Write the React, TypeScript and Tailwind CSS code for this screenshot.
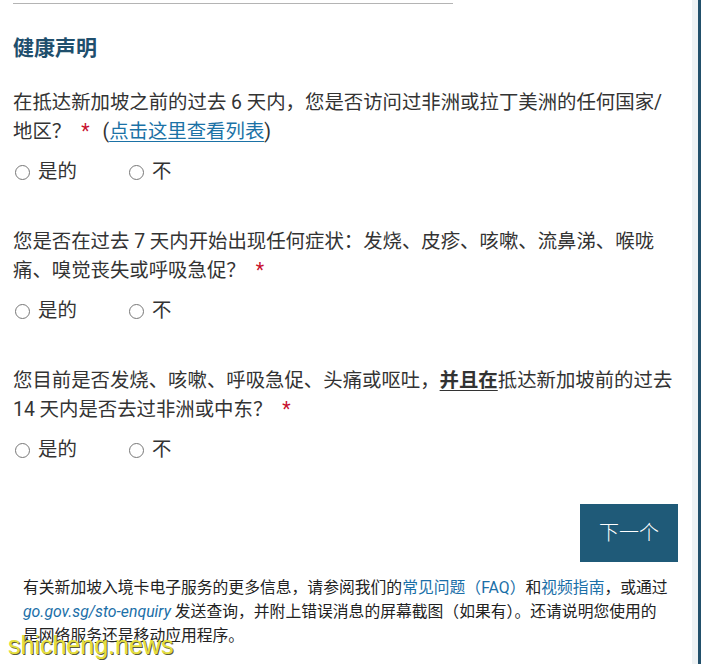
// Health declaration step of the arrival card form.
import type { ReactNode } from 'react'

const FONT = 'font-[Roboto,"Noto_Sans_CJK_SC",sans-serif]'

interface Question {
  id: string
  body: ReactNode
}

function Required() {
  return <span className="ml-[10px] text-[#c8102e]">*</span>
}

const questions: Question[] = [
  {
    id: 'q-africa-latam',
    body: (
      <>
        在抵达新加坡之前的过去 6 天内，您是否访问过非洲或拉丁美洲的任何国家/
        <br />
        地区？
        <Required />
        <span className="ml-[13px]">
          (
          <a href="#" className="text-[#1b72a6] underline underline-offset-[3px]">
            点击这里查看列表
          </a>
          )
        </span>
      </>
    ),
  },
  {
    id: 'q-symptoms',
    body: (
      <>
        您是否在过去 7 天内开始出现任何症状：发烧、皮疹、咳嗽、流鼻涕、喉咙
        <br />
        痛、嗅觉丧失或呼吸急促？
        <Required />
      </>
    ),
  },
  {
    id: 'q-mers',
    body: (
      <>
        您目前是否发烧、咳嗽、呼吸急促、头痛或呕吐，
        <b className="font-bold underline underline-offset-[3px]">并且在</b>
        抵达新加坡前的过去
        <br />
        14 天内是否去过非洲或中东？
        <Required />
      </>
    ),
  },
]

function RadioOption({ name, label, wide }: { name: string; label: string; wide?: boolean }) {
  return (
    <label className={`flex items-center ${wide ? 'w-[114px]' : ''}`}>
      <input
        type="radio"
        name={name}
        className="m-0 h-[15px] w-[15px] appearance-none rounded-full border border-[#777] bg-white"
      />
      <span className="ml-[8px]">{label}</span>
    </label>
  )
}

export default function App() {
  return (
    <div className={`relative flex h-[664px] w-[701px] overflow-hidden bg-white ${FONT}`}>
      <main className="w-[692px] pl-[13px]">
        <div className="mt-[3px] h-px w-[440px] bg-[#b4b4b4]" />

        <h2 className="mt-[30px] text-[21px] font-bold leading-[28px] text-[#1f4f6d]">健康声明</h2>

        <div className="mt-[27px] w-[667px]">
          {questions.map((q, i) => (
            <fieldset key={q.id} className={i === 0 ? '' : 'mt-[42px]'}>
              <p className="text-[19.4px] leading-[28.5px] text-[#333]">{q.body}</p>
              <div className="mt-[12px] flex h-[28px] items-center pl-[2px] text-[19.4px] text-[#333]">
                <RadioOption name={q.id} label="是的" wide />
                <RadioOption name={q.id} label="不" />
              </div>
            </fieldset>
          ))}
        </div>

        <div className="mt-[40px] flex w-[665px] justify-end">
          <button
            type="button"
            className="h-[58px] w-[98px] bg-[#1f5a78] text-[20px] font-light text-white"
          >
            下一个
          </button>
        </div>

        <p className="mt-[14px] pl-[10px] text-[15.8px] leading-[24px] whitespace-nowrap text-[#222]">
          有关新加坡入境卡电子服务的更多信息，请参阅我们的
          <a href="#" className="text-[#1b6fa8]">
            常见问题（FAQ）
          </a>
          和
          <a href="#" className="text-[#1b6fa8]">
            视频指南
          </a>
          ，或通过
          <br />
          <a href="#" className="italic text-[#1b6fa8]">
            go.gov.sg/sto-enquiry
          </a>{' '}
          发送查询，并附上错误消息的屏幕截图（如果有）。还请说明您使用的
          <br />
          是网络服务还是移动应用程序。
        </p>
      </main>

      <div className="w-[6px] bg-[#eef2f4]" />
      <div className="w-[3px] bg-[#22506b]" />

      <span className="absolute left-[8px] top-[630px] font-['Liberation_Sans',sans-serif] text-[25px] leading-[30px] text-[#e4de3c] [text-shadow:1px_1px_0_#5a5a3a]">
        shicheng.news
      </span>
    </div>
  )
}
